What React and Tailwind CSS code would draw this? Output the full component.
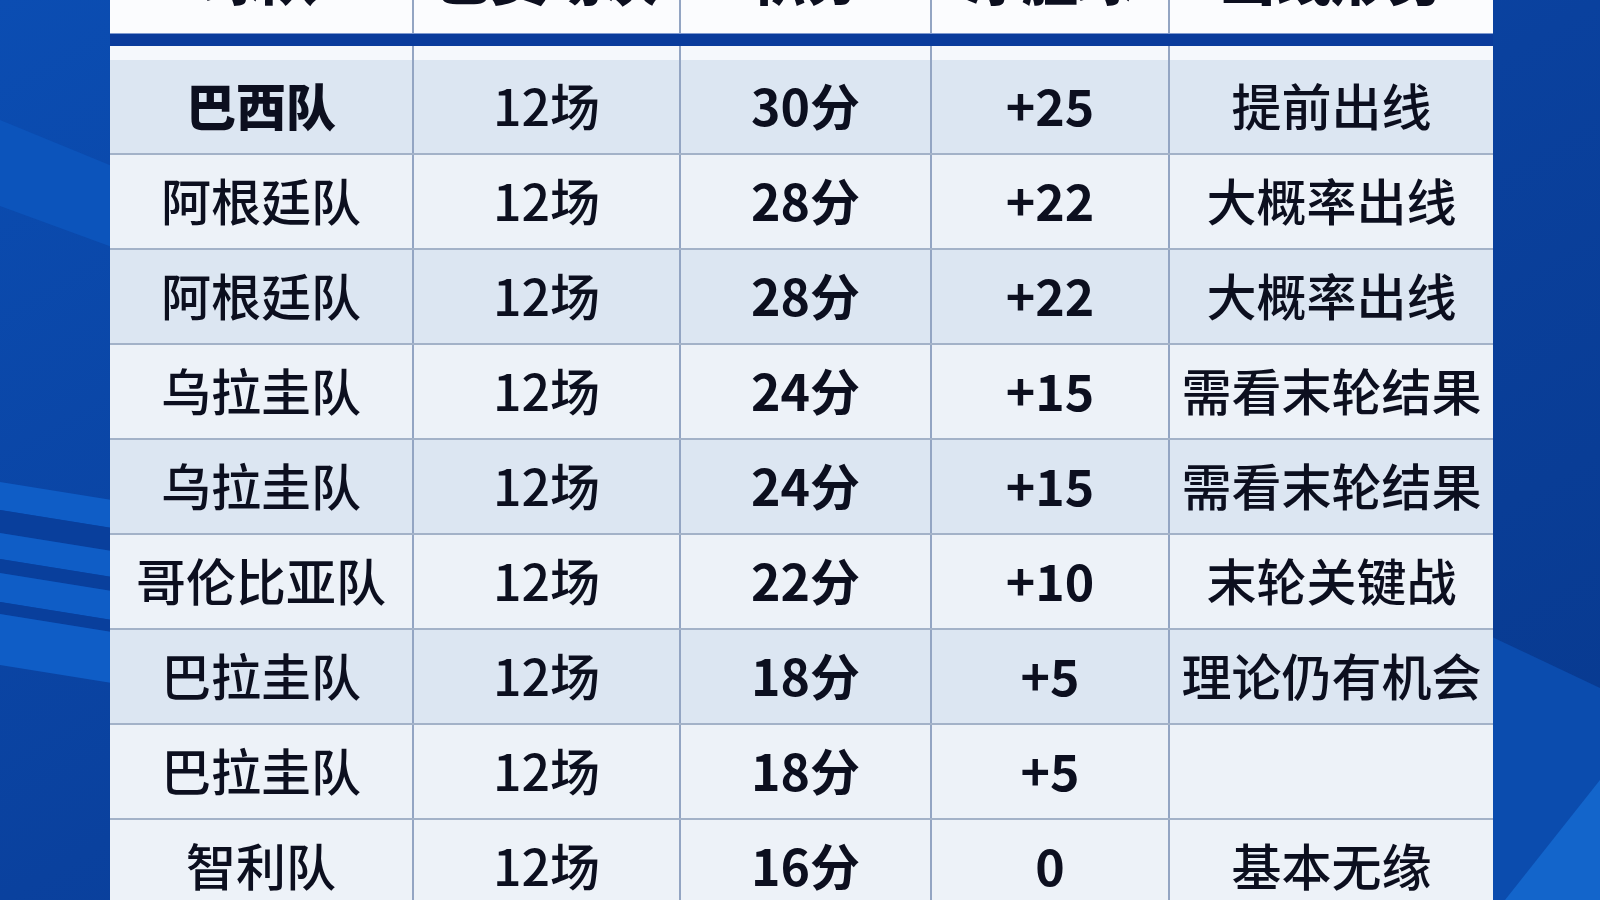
import React from "react";

const rows = [
  { team: "巴西队", games: "12场", pts: "30分", gd: "+25", status: "提前出线", bold: true },
  { team: "阿根廷队", games: "12场", pts: "28分", gd: "+22", status: "大概率出线" },
  { team: "阿根廷队", games: "12场", pts: "28分", gd: "+22", status: "大概率出线" },
  { team: "乌拉圭队", games: "12场", pts: "24分", gd: "+15", status: "需看末轮结果" },
  { team: "乌拉圭队", games: "12场", pts: "24分", gd: "+15", status: "需看末轮结果" },
  { team: "哥伦比亚队", games: "12场", pts: "22分", gd: "+10", status: "末轮关键战" },
  { team: "巴拉圭队", games: "12场", pts: "18分", gd: "+5", status: "理论仍有机会" },
  { team: "巴拉圭队", games: "12场", pts: "18分", gd: "+5", status: "" },
  { team: "智利队", games: "12场", pts: "16分", gd: "0", status: "基本无缘" },
];

const headers = ["球队", "已赛场次", "积分", "净胜球", "出线形势"];

const cols = "grid grid-cols-[304px_267px_251px_238px_323px]";
const divider = "border-r-2 border-[#93a5c3]";

function Background() {
  return (
    <svg
      className="absolute inset-0 h-full w-full"
      viewBox="0 0 1600 900"
      preserveAspectRatio="none"
    >
      <defs>
        <linearGradient id="bg" x1="0" y1="0" x2="1" y2="1">
          <stop offset="0" stopColor="#0b4db2" />
          <stop offset="0.5" stopColor="#0a419e" />
          <stop offset="1" stopColor="#08398e" />
        </linearGradient>
      </defs>
      <rect width="1600" height="900" fill="url(#bg)" />
      <polygon points="0,120 112,166 112,247 0,206" fill="#0c54bb" />
      <polygon points="0,482 112,500 112,528 0,510" fill="#0f5dc6" />
      <polygon points="0,510 112,528 112,551 0,533" fill="#093f9c" />
      <polygon points="0,533 112,551 112,577 0,559" fill="#0f5dc6" />
      <polygon points="0,559 112,577 112,591 0,573" fill="#093f9c" />
      <polygon points="0,573 112,591 112,620 0,602" fill="#0f5dc6" />
      <polygon points="0,602 112,620 112,632 0,614" fill="#093f9c" />
      <polygon points="0,614 112,632 112,683 0,665" fill="#0f5dc6" />
      <polygon points="1490,636 1600,688 1600,900 1490,900" fill="#0b4cae" />
      <polygon points="1505,900 1600,780 1600,900" fill="#1365cb" />
    </svg>
  );
}

export default function App() {
  return (
    <div className="relative h-[900px] w-full overflow-hidden font-['Noto_Sans_CJK_SC','Noto_Sans',sans-serif] text-[#0c0f1f]">
      <Background />
      <div className="relative ml-[110px] -mt-[60px] w-[1383px]">
        <div className={`${cols} h-[93px] bg-[#fbfcfe]`}>
          {headers.map((h, i) => (
            <div
              key={i}
              className={`flex items-center justify-center pb-[22px] text-[56px] font-black leading-none ${i < 4 ? divider : ""}`}
            >
              {h}
            </div>
          ))}
        </div>
        <div className="h-[13px] border-t border-[#7f9ad0] bg-[#0a3c9c]" />
        <div className={`${cols} h-[14px] bg-[#f5f8fc]`}>
          {headers.map((h, i) => (
            <div key={i} className={i < 4 ? divider : ""} />
          ))}
        </div>
        {rows.map((r, idx) => {
          const bg = idx % 2 === 0 && idx < 8 ? "bg-[#dce6f2]" : "bg-[#edf2f8]";
          const cells = [r.team, r.games, r.pts, r.gd, r.status];
          return (
            <div
              key={idx}
              className={`${cols} h-[95px] border-b-2 border-[#a3b2c8] ${bg}`}
            >
              {cells.map((c, i) => {
                let weight = "font-medium";
                if (i === 0 && r.bold) weight = "font-black";
                if (i === 2 || i === 3) weight = "font-bold";
                return (
                  <div
                    key={i}
                    className={`flex items-center justify-center pb-[5px] text-[50px] leading-none ${weight} ${i < 4 ? divider : ""}`}
                  >
                    {c}
                  </div>
                );
              })}
            </div>
          );
        })}
      </div>
    </div>
  );
}
